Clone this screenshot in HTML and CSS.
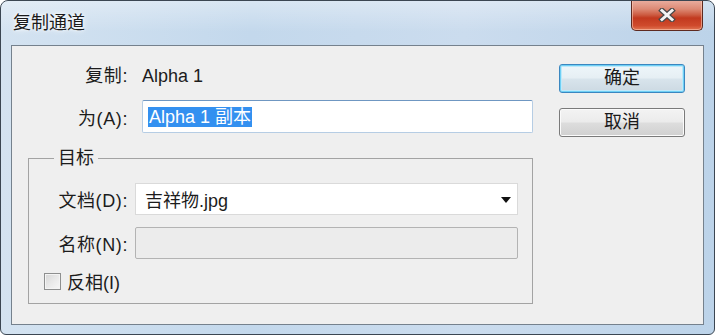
FILE: index.html
```html
<!DOCTYPE html>
<html lang="zh-CN">
<head>
<meta charset="utf-8">
<title>复制通道</title>
<link rel="stylesheet" href="styles.css">
</head>
<body>
<div class="window">
  <div class="titlebar">
    <span class="title">复制通道</span>
    <button class="close" aria-label="关闭">
      <svg width="20" height="14" viewBox="0 0 20 14">
        <path d="M5 2.5 L15 11.5 M15 2.5 L5 11.5" stroke="#4a4a4a" stroke-width="5.4" stroke-linecap="square" fill="none"/>
        <path d="M5 2.5 L15 11.5 M15 2.5 L5 11.5" stroke="#f4f4f4" stroke-width="3" stroke-linecap="square" fill="none"/>
      </svg>
    </button>
  </div>
  <div class="panel">
    <div class="form">
      <div class="row row-copy">
        <span class="label">复制:</span>
        <span class="value">Alpha 1</span>
      </div>
      <div class="row row-as">
        <span class="label">为(A):</span>
        <div class="textbox"><span class="sel">Alpha 1 副本</span></div>
      </div>
      <fieldset class="target">
        <legend>目标</legend>
        <div class="frow">
          <span class="label">文档(D):</span>
          <div class="select">
            <span>吉祥物.jpg</span>
            <svg class="arrow" width="10" height="6" viewBox="0 0 10 6"><polygon points="0,0 10,0 5,6" fill="#111"/></svg>
          </div>
        </div>
        <div class="frow">
          <span class="label">名称(N):</span>
          <div class="field-disabled"></div>
        </div>
        <div class="check">
          <span class="box"></span>
          <span>反相(I)</span>
        </div>
      </fieldset>
    </div>
    <div class="buttons">
      <button class="btn btn-default">确定</button>
      <button class="btn">取消</button>
    </div>
  </div>
</div>
</body>
</html>
```

FILE: styles.css
```css
html, body {
  margin: 0;
  padding: 0;
  background: #ffffff;
}

body {
  font-family: "Liberation Sans", "Noto Sans CJK SC", sans-serif;
  font-size: 18px;
  color: #1c1c1c;
}

.window {
  width: 715px;
  height: 335px;
  box-sizing: border-box;
  border: 1px solid #3b4652;
  border-radius: 8px 8px 6px 6px;
  background: linear-gradient(to right, #d4e3f1 0%, #c3d8ec 35%, #cbdcee 65%, #bcd3e9 100%);
  overflow: hidden;
}

.titlebar {
  height: 44px;
  display: flex;
  justify-content: space-between;
  align-items: flex-start;
  background: linear-gradient(to bottom, rgba(255,255,255,0.35), rgba(255,255,255,0) 70%);
}

.title {
  margin-left: 12px;
  margin-top: 11px;
  line-height: 22px;
  font-size: 18px;
  color: #1a1a1a;
  text-shadow: 0 0 6px #ffffff, 0 0 3px #ffffff;
}

.close {
  width: 72px;
  height: 31px;
  margin: -1px 11px 0 0;
  padding: 0;
  border: 1px solid #5e2a20;
  border-top: none;
  border-radius: 0 0 5px 5px;
  background: linear-gradient(to bottom, #eab0a2 0%, #dd8a75 30%, #cc5a40 50%, #c2391f 60%, #cf4a2c 85%, #e17552 100%);
  box-shadow: inset 0 0 0 1px rgba(255, 210, 190, 0.55);
  display: flex;
  align-items: center;
  justify-content: center;
}

.panel {
  height: 280px;
  margin: 0 10px;
  box-sizing: border-box;
  border: 1px solid #75818d;
  background: #efefef;
  display: flex;
  padding-top: 18px;
}

.form {
  width: 505px;
  padding-left: 16px;
  display: flex;
  flex-direction: column;
}

.row {
  display: flex;
  align-items: center;
  gap: 14px;
}

.label {
  width: 100px;
  text-align: right;
  letter-spacing: 0.6px;
  white-space: nowrap;
  flex: none;
}

.row-copy {
  height: 24px;
  line-height: 24px;
}

.row-as {
  margin-top: 12px;
}

.textbox {
  width: 392px;
  height: 33px;
  box-sizing: border-box;
  border: 1px solid #b6cde4;
  border-top-color: #6f97c2;
  border-radius: 2px;
  background: #ffffff;
  display: flex;
  align-items: center;
  padding-left: 5px;
}

.sel {
  background: #3390f0;
  color: #ffffff;
  line-height: 20px;
  padding: 0 1px;
}

.target {
  margin: 15px 0 0 0;
  width: 505px;
  box-sizing: border-box;
  border: 1px solid #a3a3a3;
  padding: 0 13px 12px 0;
  display: flex;
  flex-direction: column;
}

.target legend {
  margin-left: 25px;
  padding: 0 4px;
  line-height: 20px;
  font-size: 18px;
}

.frow {
  display: flex;
  align-items: center;
  gap: 7px;
  margin-top: 15px;
}

.frow + .frow {
  margin-top: 12px;
}

.frow .label {
  width: 99px;
}

.select {
  width: 383px;
  height: 32px;
  box-sizing: border-box;
  border: 1px solid #dadada;
  background: #ffffff;
  display: flex;
  align-items: center;
  justify-content: space-between;
  padding: 0 6px 0 9px;
}

.arrow {
  display: block;
  margin-top: 1px;
}

.field-disabled {
  width: 383px;
  height: 32px;
  box-sizing: border-box;
  border: 1px solid #b3b3b3;
  border-radius: 2px;
  background: #ececec;
}

.check {
  display: flex;
  align-items: center;
  gap: 6px;
  margin-top: 12px;
  padding-left: 15px;
  height: 20px;
}

.box {
  width: 17px;
  height: 17px;
  box-sizing: border-box;
  border: 1px solid #8e8f8f;
  background: linear-gradient(135deg, #d6d6d6 0%, #e9e9e9 50%, #f7f7f7 100%);
  box-shadow: inset 0 0 0 1px #f4f4f4;
}

.buttons {
  margin-left: 26px;
  display: flex;
  flex-direction: column;
  gap: 15px;
}

.btn {
  width: 126px;
  height: 29px;
  padding: 0;
  font-family: "Liberation Sans", "Noto Sans CJK SC", sans-serif;
  font-size: 18px;
  line-height: 27px;
  color: #1a1a1a;
  border: 1px solid #7a7a7a;
  border-radius: 3px;
  background: linear-gradient(to bottom, #f3f3f3 0%, #ebebeb 48%, #dddddd 52%, #d0d0d0 100%);
  box-shadow: inset 0 0 0 1px #fbfbfb;
}

.btn-default {
  border-color: #3b87c0;
  box-shadow: inset 0 0 0 1px #6fd0f5, inset 0 0 0 2px #bfe9fa;
  background: linear-gradient(to bottom, #eef6fa 0%, #e6eff4 48%, #d8e4ec 52%, #ccd9e2 100%);
}
```
